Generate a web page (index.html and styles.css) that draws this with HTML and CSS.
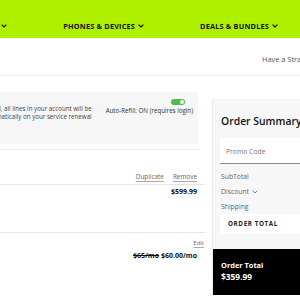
FILE: index.html
```html
<!DOCTYPE html>
<html lang="en">
<head>
    <meta charset="UTF-8">
    <meta name="viewport" content="width=device-width, initial-scale=1.0">
    <title>Cart</title>
    <link rel="stylesheet" href="styles.css">
</head>
<body>
    <header class="topbar">
        <nav class="nav">
            <a class="nav-item">PLANS <svg class="chev" viewBox="0 0 6 4"><path d="M0.6 0.6 L3 3 L5.4 0.6"/></svg></a>
            <a class="nav-item">PHONES &amp; DEVICES <svg class="chev" viewBox="0 0 6 4"><path d="M0.6 0.6 L3 3 L5.4 0.6"/></svg></a>
            <a class="nav-item">DEALS &amp; BUNDLES <svg class="chev" viewBox="0 0 6 4"><path d="M0.6 0.6 L3 3 L5.4 0.6"/></svg></a>
        </nav>
    </header>

    <div class="subbar">
        <p class="help">Have a Straight Talk question? Call us</p>
    </div>

    <main class="main">
        <section class="cart">
            <div class="notice">
                <div class="notice-text">
                    When you turn on Auto-Refill, all lines in your account will be<br>
                    renewed automatically on your service renewal
                </div>
                <div class="autorefill">
                    <span class="toggle"></span>
                    <span>Auto-Refill: ON (requires login)</span>
                </div>
            </div>

            <div class="divider"></div>

            <div class="line-item">
                <div class="actions">
                    <a class="link">Duplicate</a>
                    <a class="link">Remove</a>
                </div>
                <div class="price-row">
                    <span class="price">$599.99</span>
                </div>
            </div>

            <div class="line-item plan">
                <div class="actions edit">
                    <a class="link">Edit</a>
                </div>
                <div class="price-row">
                    <span class="price"><s>$65/mo</s> $60.00/mo</span>
                </div>
            </div>
        </section>

        <aside class="summary">
            <h2>Order Summary</h2>
            <div class="promo">Promo Code</div>
            <ul class="totals">
                <li>SubTotal</li>
                <li>Discount <svg class="chev thin" viewBox="0 0 6 4"><path d="M0.6 0.6 L3 3 L5.4 0.6"/></svg></li>
                <li>Shipping</li>
            </ul>
            <div class="order-total-label">ORDER TOTAL</div>
            <div class="order-total">
                <p>Order Total</p>
                <p class="amount">$359.99</p>
            </div>
        </aside>
    </main>
</body>
</html>
```

FILE: styles.css
```css
* {
    margin: 0;
    padding: 0;
    box-sizing: border-box;
}

body {
    font-family: 'Open Sans', 'Liberation Sans', sans-serif;
    background: white;
    color: #333;
    overflow: hidden;
}

.topbar {
    background: #aff000;
    height: 38px;
    overflow: hidden;
}

.nav {
    display: flex;
    gap: 56px;
    margin-left: -26.5px;
    padding-top: 21px;
    white-space: nowrap;
}

.nav-item {
    display: flex;
    align-items: center;
    gap: 3px;
    font-size: 7.3px;
    font-weight: 700;
    letter-spacing: 0.2px;
    color: #111;
}

.chev {
    width: 6px;
    height: 4px;
    fill: none;
    stroke: #111;
    stroke-width: 1.2;
}

.chev.thin {
    stroke: #666;
    stroke-width: 0.8;
}

.subbar {
    height: 38px;
    border-bottom: 1px solid #ececec;
    padding-left: 262px;
    padding-top: 16px;
    white-space: nowrap;
}

.help {
    font-size: 7.4px;
    color: #555;
}

.main {
    display: flex;
    margin-left: -400px;
}

.cart {
    width: 605px;
    flex-shrink: 0;
    padding-top: 16px;
}

.notice {
    display: flex;
    gap: 14px;
    height: 52px;
    margin-right: 7px;
    padding: 7px 5px 0 0;
    background: #f6f6f6;
    font-size: 6.2px;
    line-height: 8px;
}

.notice-text {
    flex: 1;
    text-align: right;
    padding-top: 6px;
    color: #444;
    white-space: nowrap;
}

.autorefill {
    display: flex;
    flex-direction: column;
    align-items: flex-end;
    gap: 2px;
    color: #333;
    white-space: nowrap;
}

.toggle {
    width: 14px;
    height: 6px;
    margin-right: 8px;
    border-radius: 3px;
    background: #4dbb4d;
    position: relative;
}

.toggle::after {
    content: '';
    position: absolute;
    right: 1px;
    top: 1px;
    width: 4px;
    height: 4px;
    border-radius: 50%;
    background: white;
}

.divider {
    margin: 5px 5px 0 0;
    border-top: 1px solid #efefef;
}

.line-item {
    padding-top: 22px;
}

.actions {
    display: flex;
    justify-content: flex-end;
    gap: 9px;
    padding: 0 8px 3px 0;
    border-bottom: 1px solid #e6e6e6;
    font-size: 6.4px;
    line-height: 9px;
}

.link {
    color: #666;
    text-decoration: underline;
    text-decoration-color: #aaa;
    text-underline-offset: 1.5px;
}

.price-row {
    display: flex;
    justify-content: flex-end;
    padding: 2px 8px 0 0;
    height: 47px;
}

.price {
    font-size: 7px;
    font-weight: 700;
    color: #111;
    line-height: 10px;
}

.plan {
    padding-top: 0;
}

.plan .actions {
    border-bottom: none;
    border-top: 1px solid #e6e6e6;
    padding: 6px 1px 0 0;
    font-size: 6px;
}

.plan .price-row {
    padding-top: 3px;
}

.summary {
    margin-left: 7px;
    margin-top: 23px;
    width: 300px;
    flex-shrink: 0;
    background: #f7f7f7;
    border-left: 1px solid #ececec;
}

.summary h2 {
    font-size: 10.4px;
    font-weight: 600;
    color: #111;
    line-height: 15px;
    padding: 15px 0 0 8px;
}

.promo {
    margin: 9px 0 0 7px;
    height: 26px;
    background: white;
    border-bottom: 1px solid #888;
    padding: 9px 0 0 6px;
    font-size: 6.8px;
    color: #777;
}

.totals {
    list-style: none;
    padding: 5px 0 0 8px;
    font-size: 6.8px;
    color: #666;
}

.totals li {
    display: flex;
    align-items: center;
    gap: 3px;
    height: 15px;
}

.order-total-label {
    margin: 0 0 0 7px;
    height: 20px;
    background: white;
    padding: 5px 0 0 8px;
    font-size: 6.3px;
    font-weight: 700;
    letter-spacing: 0.6px;
    color: #222;
}

.order-total {
    margin-top: 15px;
    height: 46px;
    background: black;
    color: white;
    padding: 10px 0 0 8px;
    font-weight: 700;
}

.order-total p {
    font-size: 7.4px;
    line-height: 12px;
}

.order-total .amount {
    font-size: 8.4px;
}
```
